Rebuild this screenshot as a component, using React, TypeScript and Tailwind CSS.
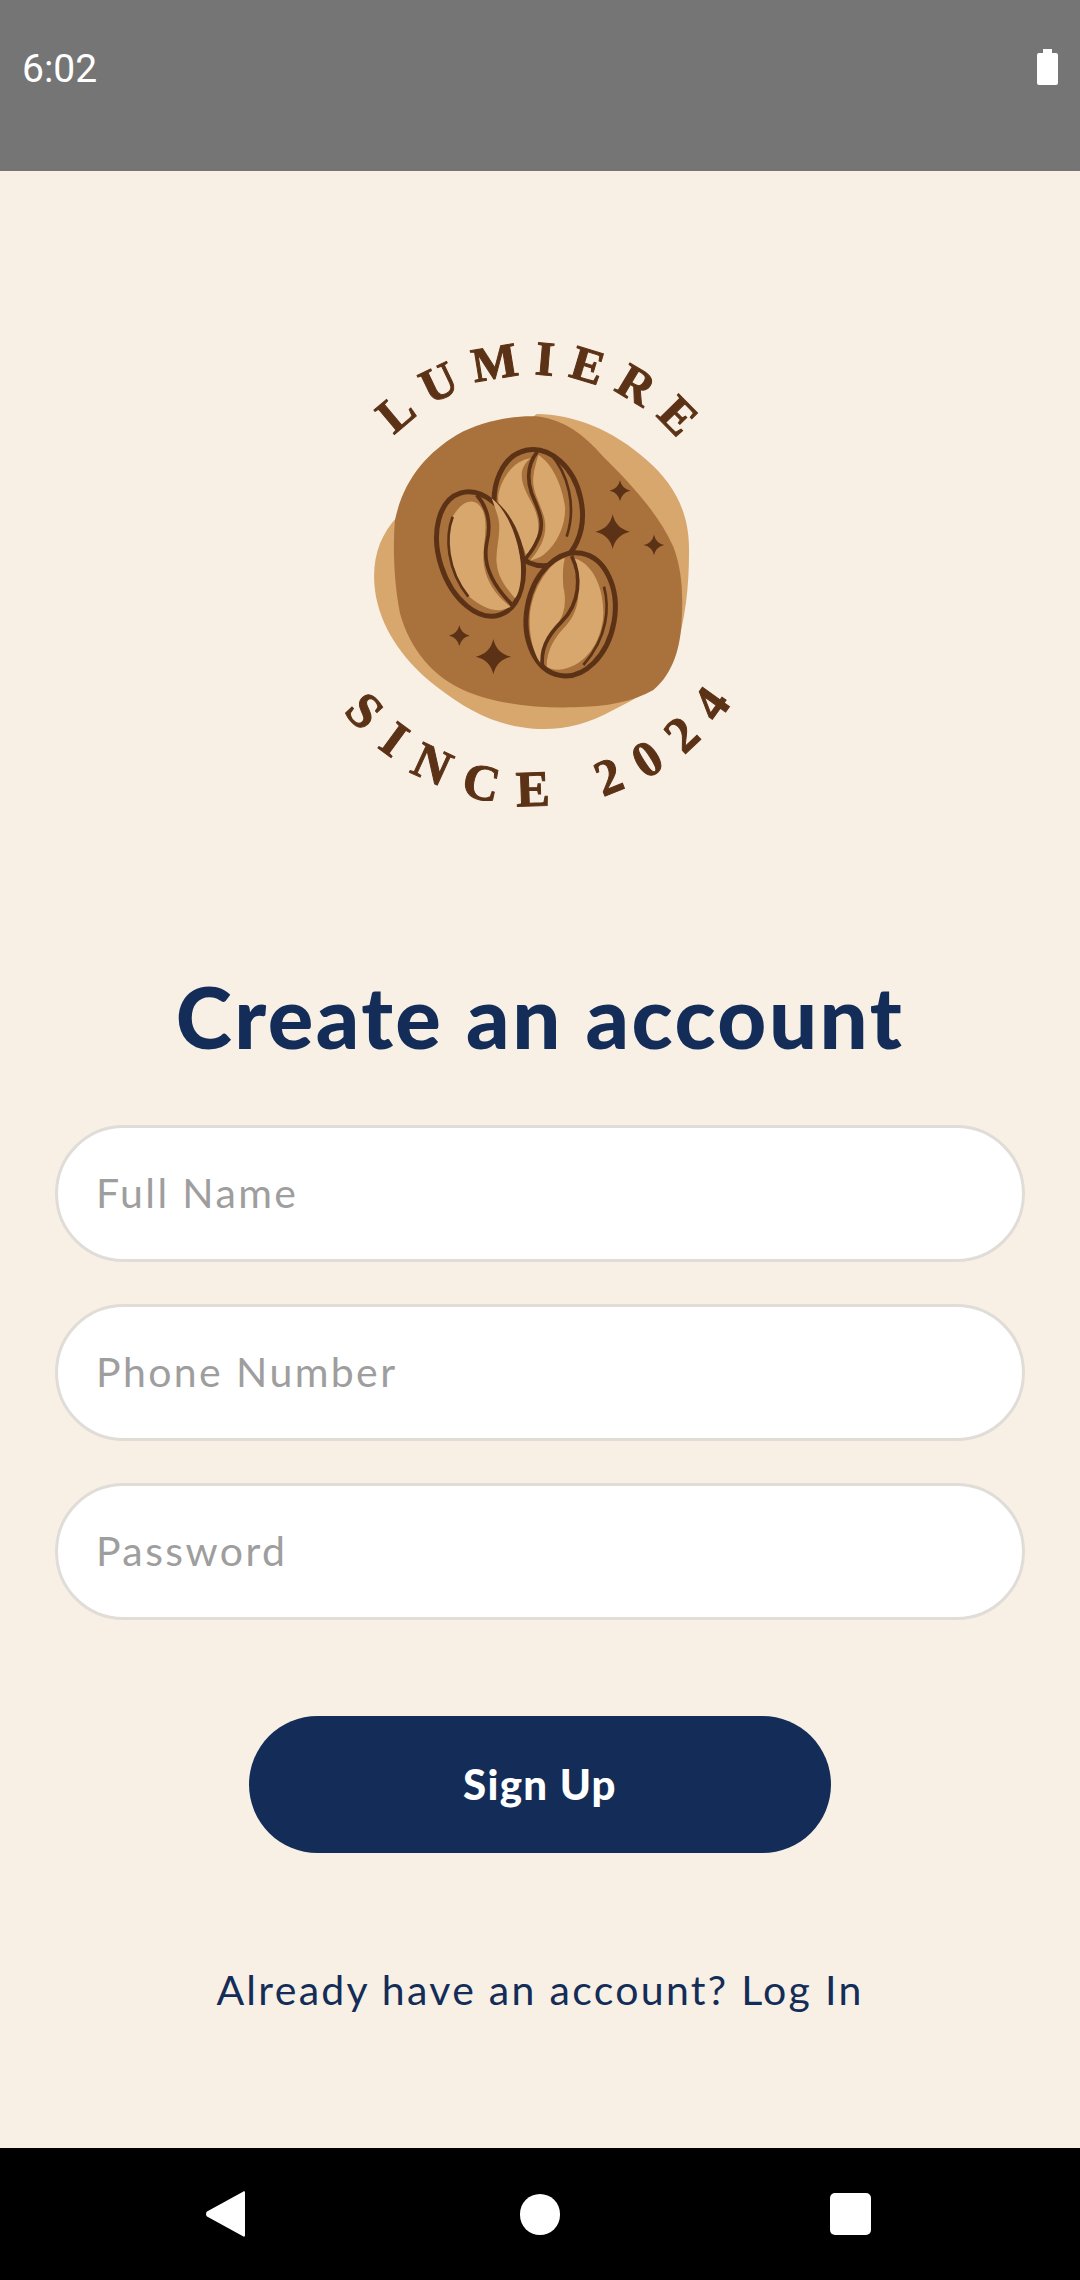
const fields = ['Full Name', 'Phone Number', 'Password'];

const stars = [
  [900, 512, 31],
  [878, 635, 52],
  [1002, 675, 31],
  [418, 947, 31],
  [520, 1010, 53],
];

function starPath(x: number, y: number, r: number) {
  const k = r * 0.18;
  return `M${x} ${y - r}Q${x + k} ${y - k} ${x + r} ${y}Q${x + k} ${y + k} ${x} ${y + r}Q${x - k} ${y + k} ${x - r} ${y}Q${x - k} ${y - k} ${x} ${y - r}Z`;
}

function Logo() {
  const dark = '#5c3216';
  const mid = '#a9713c';
  const light = '#d8a76d';
  return (
    <svg viewBox="0 0 1320 1500" className="w-[440px] h-[500px] block overflow-visible">
      <defs>
        <path id="arcTop" d="M70 740A575 575 0 0 1 1220 740" />
        <path id="arcBottom" d="M-77 735A722 722 0 0 0 1367 735" />
      </defs>
      <path
        fill={light}
        d="M650 282C760 282 880 330 980 420C1060 490 1105 570 1107 680C1108 780 1100 900 1060 1010C1030 1090 960 1130 880 1170C800 1215 720 1232 640 1226C530 1218 440 1170 350 1100C260 1030 190 940 168 830C150 730 175 650 232 590Z"
      />
      <path
        fill={mid}
        d="M225 600C250 480 320 400 410 345C490 300 590 285 660 290C730 300 790 340 850 410C920 480 1010 570 1060 680C1085 745 1090 820 1085 900C1082 980 1060 1060 1000 1110C940 1145 860 1160 760 1162C640 1165 520 1150 430 1110C340 1070 270 990 240 880C222 790 218 680 225 600Z"
      />

      {/* top bean */}
      <ellipse cx="655" cy="563" rx="130" ry="176" transform="rotate(-12 655 563)" fill={mid} stroke={dark} strokeWidth="15" />
      <path fill={light} d="M632 415C585 420 545 470 535 525C530 560 560 610 590 650C605 670 615 690 618 705C645 675 665 640 650 585C640 545 605 510 605 465C605 445 618 425 632 415Z" />
      <path fill={light} d="M655 405C695 430 725 490 735 560C738 610 715 670 670 705C660 712 645 718 630 722C665 680 685 640 672 590C660 550 635 510 640 470C642 445 650 425 655 405Z" />
      <path fill="none" stroke={dark} strokeWidth="11" d="M652 395C625 430 618 470 635 520C655 570 680 610 650 665C640 690 625 705 612 722" />
      <path fill="none" stroke={dark} strokeWidth="8" d="M690 400C745 460 770 560 740 650" />

      {/* left bean */}
      <ellipse cx="480" cy="702" rx="122" ry="192" transform="rotate(-18 480 702)" fill={mid} stroke={dark} strokeWidth="15" />
      <path fill={light} d="M398 590C430 535 470 530 490 575C505 620 490 665 490 715C492 780 530 830 572 860C540 880 500 870 460 840C410 800 385 720 385 650C385 625 390 605 398 590Z" />
      <path fill={light} d="M515 535C560 570 595 650 602 730C606 780 598 820 585 835C565 810 535 780 530 730C525 690 545 640 535 595C530 575 522 555 515 535Z" />
      <path fill="none" stroke={dark} strokeWidth="11" d="M470 525C505 565 515 610 500 670C488 730 510 790 580 858" />
      <path fill="none" stroke={dark} strokeWidth="8" d="M398 590C375 650 380 750 445 830" />

      {/* bottom bean */}
      <ellipse cx="752" cy="883" rx="132" ry="186" transform="rotate(10 752 883)" fill={mid} stroke={dark} strokeWidth="15" />
      <path fill={light} d="M735 715C690 725 640 800 630 880C625 940 640 1000 662 1030C665 990 680 950 710 915C735 885 740 840 730 800C728 770 728 735 735 715Z" />
      <path fill={light} d="M760 715C810 725 850 790 850 880C848 950 810 1025 740 1045C720 1052 695 1050 680 1040C680 990 705 950 735 920C775 880 785 820 765 760C762 745 760 730 760 715Z" />
      <path fill="none" stroke={dark} strokeWidth="11" d="M755 708C785 770 780 850 725 905C680 950 660 990 668 1045" />
      <path fill="none" stroke={dark} strokeWidth="8" d="M852 800C868 860 865 950 790 1035" />

      {stars.map(([x, y, r]) => (
        <path key={`${x}-${y}`} fill={dark} d={starPath(x, y, r)} />
      ))}

      <text textAnchor="middle" strokeWidth="3" stroke={dark} className="font-['Liberation_Serif'] font-bold text-[146px] tracking-[43px] fill-[#5c3216]">
        <textPath href="#arcTop" startOffset="51.5%">LUMIERE</textPath>
      </text>
      <text textAnchor="middle" strokeWidth="3" stroke={dark} className="font-['Liberation_Serif'] font-bold text-[152px] tracking-[61px] fill-[#5c3216]">
        <textPath href="#arcBottom" startOffset="52%">SINCE 2024</textPath>
      </text>
    </svg>
  );
}

export default function App() {
  return (
    <div className="w-[1080px] h-[2280px] flex flex-col bg-[#f8f0e5] font-['Lato',sans-serif]">
      <div className="h-[171px] shrink-0 bg-[#757575] flex items-start justify-between pl-[22px] pr-[22px] pt-[46px]">
        <span className="font-['Roboto',sans-serif] text-[39px] leading-[46px] text-white">6:02</span>
        <svg viewBox="0 0 21 36" className="w-[21px] h-[36px] mt-[3px]">
          <path fill="#fff" d="M6 0h9v4h4a2 2 0 0 1 2 2v28a2 2 0 0 1-2 2H2a2 2 0 0 1-2-2V6a2 2 0 0 1 2-2h4z" />
        </svg>
      </div>

      <main className="flex-1 flex flex-col items-center">
        <div className="mt-[149px]">
          <Logo />
        </div>

        <h1 className="mt-[146px] text-[85px] leading-[100px] font-black tracking-[2.5px] text-[#132d58]">Create an account</h1>

        <form className="mt-[59px] w-[970px] flex flex-col gap-[42px]">
          {fields.map(label => (
            <input
              key={label}
              placeholder={label}
              className="h-[137px] w-full rounded-full bg-white border-[3px] border-[#e0dcd8] px-[38px] pb-[2px] text-[41px] tracking-[2.4px] outline-none placeholder:text-[#9e9e9e]"
            />
          ))}
        </form>

        <button className="mt-[96px] w-[582px] h-[137px] rounded-full bg-[#132d58] text-white text-[42px] font-black tracking-[1.3px]">
          Sign Up
        </button>

        <p className="mt-[113px] text-[41px] leading-[48px] tracking-[2.3px] text-[#132d58]">Already have an account? Log In</p>
      </main>

      <nav className="h-[132px] shrink-0 bg-black flex items-center pl-[206px]">
        <svg viewBox="0 0 39 46" className="w-[39px] h-[46px]">
          <path fill="#fff" d="M37 .8c1-.9 2-.4 2 .9v42.6c0 1.3-1 1.8-2 .9L1 25.5c-1.3-1.2-1.3-3.8 0-5z" />
        </svg>
        <div className="ml-[275px] w-[40px] h-[41px] rounded-full bg-white" />
        <div className="ml-[270px] w-[41px] h-[42px] rounded-[5px] bg-white" />
      </nav>
    </div>
  );
}
